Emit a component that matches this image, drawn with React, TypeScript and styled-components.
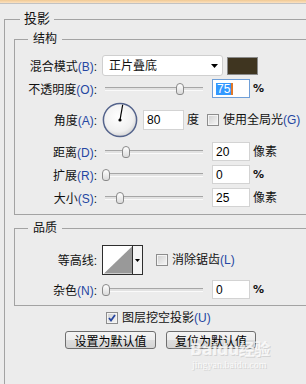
import React from "react";
import styled, { createGlobalStyle } from "styled-components";

const Global = createGlobalStyle`
  html, body { margin: 0; padding: 0; width: 306px; height: 384px; overflow: hidden; background: #ececec; }
  body { font-family: "Liberation Sans", "Noto Sans CJK SC", sans-serif; font-size: 12px; color: #111; }
  * { box-sizing: border-box; }
`;

const Screen = styled.div`
  position: relative;
  width: 306px;
  height: 384px;
  overflow: hidden;
  background: #ececec;
`;

const TopBar = styled.div`
  height: 4px;
  background: linear-gradient(#f1c993, #fbe2c2);
  border-bottom: 1px solid #c2c2c2;
`;

const Body = styled.div`
  padding-left: 4px;
`;

const Group = styled.fieldset<{ $mt: number; $pt: number; $pb: number; $pl: number; $w: number }>`
  margin: ${(p) => p.$mt}px 0 0 0;
  padding: ${(p) => p.$pt}px 0 ${(p) => p.$pb}px ${(p) => p.$pl}px;
  width: ${(p) => p.$w}px;
  border: 1px solid #a3a3a3;
  border-right: none;
  min-width: 0;
`;

const Legend = styled.legend<{ $size: number; $lh: number; $ml: number; $px: number }>`
  margin-left: ${(p) => p.$ml}px;
  padding: 0 ${(p) => p.$px}px;
  font-size: ${(p) => p.$size}px;
  line-height: ${(p) => p.$lh}px;
  color: #111;
`;

const Row = styled.div<{ $h: number; $mt?: number }>`
  display: flex;
  align-items: center;
  height: ${(p) => p.$h}px;
  margin-top: ${(p) => p.$mt ?? 0}px;
`;

const Label = styled.div`
  width: 82px;
  flex: none;
  margin-right: 5px;
  text-align: right;
  font-size: 12px;
  line-height: 14px;
  white-space: nowrap;
  padding-top: 2px;
`;

const Key = styled.span`
  color: #2446a2;
`;

const Dropdown = styled.div`
  width: 121px;
  height: 21px;
  flex: none;
  display: flex;
  align-items: center;
  justify-content: space-between;
  padding: 0 4px 0 6px;
  background: #fff;
  border: 1px solid #cfcfcf;
  border-radius: 3px;
  font-size: 12px;
  line-height: 14px;
`;

const Swatch = styled.div<{ $color: string }>`
  width: 31px;
  height: 18px;
  flex: none;
  margin-left: 4px;
  background: ${(p) => p.$color};
  border: 1px solid #8a8a8a;
`;

const Slider = styled.div`
  position: relative;
  width: 106px;
  height: 14px;
  flex: none;
  display: flex;
  align-items: center;
  padding-left: 3px;
  margin-right: 4px;
`;

const Track = styled.div`
  width: 98px;
  height: 4px;
  background: #e2e2e2;
  border-top: 1px solid #a6a6a6;
  border-bottom: 1px solid #fafafa;
`;

const Thumb = styled.div`
  position: absolute;
  top: 1px;
  width: 8px;
  height: 12px;
  border: 1px solid #8a8a8a;
  border-radius: 4px 4px 3px 3px;
  background: linear-gradient(#ffffff, #dadada);
`;

const NumField = styled.div<{ $w: number; $h: number; $focus?: boolean }>`
  width: ${(p) => p.$w}px;
  height: ${(p) => p.$h}px;
  flex: none;
  display: flex;
  align-items: center;
  padding-left: 3px;
  background: #fff;
  border: 1px solid ${(p) => (p.$focus ? "#6f9fd8" : "#d3d3d3")};
  font-family: "Liberation Sans", sans-serif;
  font-size: 12px;
  color: #000;
`;

const Selected = styled.span`
  background: #3399ff;
  color: #fff;
  line-height: 12px;
  padding: 0 1px 0 1px;
`;

const Caret = styled.span`
  width: 2px;
  height: 12px;
  background: #e0782a;
`;

const Unit = styled.span<{ $ml?: number }>`
  margin-left: ${(p) => p.$ml ?? 3}px;
  font-size: 12px;
  line-height: 14px;
  white-space: nowrap;
`;

const Percent = styled.span`
  margin-left: 3px;
  font-family: "DejaVu Sans", sans-serif;
  font-weight: bold;
  font-size: 11px;
  color: #111;
`;

const Dial = styled.svg`
  flex: none;
  margin-right: 5px;
`;

const CheckWrap = styled.label<{ $ml?: number }>`
  display: flex;
  align-items: center;
  margin-left: ${(p) => p.$ml ?? 0}px;
  font-size: 12px;
  line-height: 14px;
  white-space: nowrap;
`;

const Box = styled.span`
  width: 12px;
  height: 12px;
  flex: none;
  margin-right: 4px;
  display: flex;
  align-items: center;
  justify-content: center;
  border: 1px solid #8d8d8d;
  box-shadow: inset 0 0 0 1px #f4f4f4;
  background: linear-gradient(135deg, #cfcfcf, #f7f7f7);
`;

const Contour = styled.div`
  width: 41px;
  height: 30px;
  flex: none;
  display: flex;
  border: 1px solid #2e2e2e;
  background: #fff;
`;

const ContourPreview = styled.svg`
  flex: none;
  border-right: 1px solid #2e2e2e;
`;

const ContourArrow = styled.div`
  flex: 1;
  display: flex;
  align-items: center;
  justify-content: center;
  background: #f4f4f4;
`;

const CheckRow = styled.div`
  display: flex;
  align-items: center;
  height: 14px;
  margin-top: 5px;
  padding-left: 92px;
`;

const ButtonRow = styled.div`
  display: flex;
  gap: 10px;
  margin-top: 6px;
  padding-left: 51px;
`;

const Button = styled.button<{ $w: number }>`
  width: ${(p) => p.$w}px;
  height: 18px;
  padding: 0;
  border: 1px solid #6f6f6f;
  border-radius: 3px;
  background: linear-gradient(#f4f4f4 0%, #ececec 50%, #dedede 51%, #d4d4d4 100%);
  font-family: "Noto Sans CJK SC", sans-serif;
  font-size: 12px;
  line-height: 15px;
  color: #000;
`;

const Watermark = styled.div`
  position: absolute;
  left: 190px;
  top: 340px;
  display: flex;
  flex-direction: column;
  align-items: flex-start;
  color: rgba(255, 255, 255, 0.75);
  pointer-events: none;
`;

const MarkTitle = styled.div`
  font-family: "DejaVu Sans", "Noto Sans CJK SC", sans-serif;
  font-weight: bold;
  font-size: 16px;
  line-height: 19px;
  letter-spacing: -0.5px;
  text-shadow: 1px 1px 0 rgba(180, 180, 180, 0.45);
`;

const MarkSub = styled.div`
  font-family: "Liberation Serif", serif;
  font-size: 10px;
  line-height: 12px;
  margin-left: 2px;
  text-shadow: 1px 1px 0 rgba(180, 180, 180, 0.45);
`;

const DownArrow = ({ w, h }: { w: number; h: number }) => (
  <svg width={w} height={h} viewBox={`0 0 ${w} ${h}`}>
    <polygon points={`0,0 ${w},0 ${w / 2},${h}`} fill="#000" />
  </svg>
);

const Check = ({ checked }: { checked?: boolean }) => (
  <Box>
    {checked && (
      <svg width="8" height="8" viewBox="0 0 8 8">
        <path d="M1 4 L3 6.5 L7 1" stroke="#2646a0" strokeWidth="1.8" fill="none" />
      </svg>
    )}
  </Box>
);

const SliderCtl = ({ pos }: { pos: number }) => (
  <Slider>
    <Track />
    <Thumb style={{ left: Math.round(pos * 98) }} />
  </Slider>
);

const AngleDial = ({ deg }: { deg: number }) => {
  const r = (deg * Math.PI) / 180;
  const x = 18 + 15.5 * Math.cos(r);
  const y = 18 - 15.5 * Math.sin(r);
  return (
    <Dial width="36" height="36" viewBox="0 0 36 36">
      <defs>
        <radialGradient id="dialFill" cx="45%" cy="40%" r="60%">
          <stop offset="0%" stopColor="#ffffff" />
          <stop offset="75%" stopColor="#f0f0f0" />
          <stop offset="100%" stopColor="#d6d6d6" />
        </radialGradient>
      </defs>
      <circle cx="18" cy="18" r="16.6" fill="url(#dialFill)" stroke="#55648c" strokeWidth="1.5" />
      <line x1="18" y1="18" x2={x} y2={y} stroke="#000" strokeWidth="1.2" />
      <circle cx="18" cy="18" r="1.6" fill="#000" />
    </Dial>
  );
};

export default function App() {
  return (
    <Screen>
      <Global />
      <TopBar />
      <Body>
        <Group $mt={7} $pt={5} $pb={60} $pl={9} $w={400}>
          <Legend $size={13} $lh={16} $ml={6} $px={4}>投影</Legend>

          <Group $mt={0} $pt={9} $pb={7} $pl={0} $w={390}>
            <Legend $size={12} $lh={14} $ml={13} $px={5}>结构</Legend>
            <Row $h={21}>
              <Label>混合模式<Key>(B)</Key>:</Label>
              <Dropdown>
                <span>正片叠底</span>
                <DownArrow w={7} h={4} />
              </Dropdown>
              <Swatch $color="#3f3520" />
            </Row>
            <Row $h={19} $mt={3}>
              <Label>不透明度<Key>(O)</Key>:</Label>
              <SliderCtl pos={0.755} />
              <NumField $w={38} $h={19} $focus>
                <Selected>75</Selected>
                <Caret />
              </NumField>
              <Percent>%</Percent>
            </Row>
            <Row $h={35} $mt={4}>
              <Label>角度<Key>(A)</Key>:</Label>
              <AngleDial deg={80} />
              <NumField $w={41} $h={20}>80</NumField>
              <Unit>度</Unit>
              <CheckWrap $ml={8}>
                <Check />
                使用全局光<Key>(G)</Key>
              </CheckWrap>
            </Row>
            <Row $h={19} $mt={5}>
              <Label>距离<Key>(D)</Key>:</Label>
              <SliderCtl pos={0.2} />
              <NumField $w={38} $h={19}>20</NumField>
              <Unit $ml={3}>像素</Unit>
            </Row>
            <Row $h={19} $mt={4}>
              <Label>扩展<Key>(R)</Key>:</Label>
              <SliderCtl pos={0} />
              <NumField $w={38} $h={19}>0</NumField>
              <Percent>%</Percent>
            </Row>
            <Row $h={19} $mt={4}>
              <Label>大小<Key>(S)</Key>:</Label>
              <SliderCtl pos={0.14} />
              <NumField $w={38} $h={19}>25</NumField>
              <Unit $ml={3}>像素</Unit>
            </Row>
          </Group>

          <Group $mt={6} $pt={10} $pb={6} $pl={0} $w={390}>
            <Legend $size={12} $lh={14} $ml={13} $px={5}>品质</Legend>
            <Row $h={30}>
              <Label>等高线:</Label>
              <Contour>
                <ContourPreview width="30" height="28" viewBox="0 0 30 28">
                  <rect x="0" y="0" width="30" height="28" fill="#fff" />
                  <polygon points="1,28 30,0 30,28" fill="#999999" />
                </ContourPreview>
                <ContourArrow>
                  <DownArrow w={5} h={3} />
                </ContourArrow>
              </Contour>
              <CheckWrap $ml={13}>
                <Check />
                消除锯齿<Key>(L)</Key>
              </CheckWrap>
            </Row>
            <Row $h={19} $mt={5}>
              <Label>杂色<Key>(N)</Key>:</Label>
              <SliderCtl pos={0} />
              <NumField $w={38} $h={19}>0</NumField>
              <Percent>%</Percent>
            </Row>
          </Group>

          <CheckRow>
            <CheckWrap>
              <Check checked />
              图层挖空投影<Key>(U)</Key>
            </CheckWrap>
          </CheckRow>
          <ButtonRow>
            <Button $w={91}>设置为默认值</Button>
            <Button $w={90}>复位为默认值</Button>
          </ButtonRow>
        </Group>
      </Body>
      <Watermark>
        <MarkTitle>Baidu经验</MarkTitle>
        <MarkSub>jingyan.baidu.com</MarkSub>
      </Watermark>
    </Screen>
  );
}
